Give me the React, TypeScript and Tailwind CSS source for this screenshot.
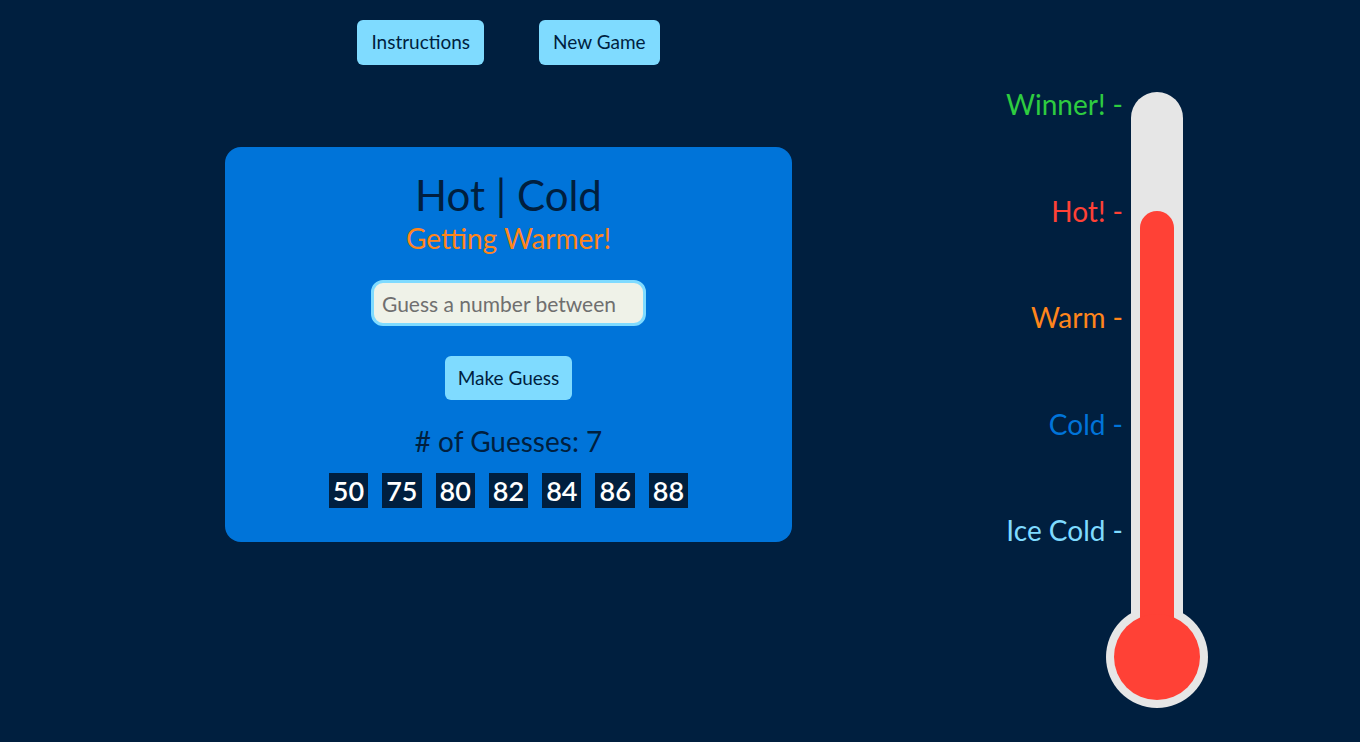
const guesses = [50, 75, 80, 82, 84, 86, 88];

const levels = [
  { label: "Winner! -", color: "text-[#2ecc40]" },
  { label: "Hot! -", color: "text-[#ff4136]" },
  { label: "Warm -", color: "text-[#ff851b]" },
  { label: "Cold -", color: "text-[#0074d9]" },
  { label: "Ice Cold -", color: "text-[#7fdbff]" },
];

function Thermometer() {
  return (
    <svg width="102" height="616" viewBox="0 0 102 616" className="mt-[92px] -ml-[17px] shrink-0">
      <rect x="25" y="0" width="52" height="560" rx="26" fill="#e6e6e6" />
      <circle cx="51" cy="565" r="51" fill="#e6e6e6" />
      <rect x="34" y="119" width="34" height="440" rx="17" fill="#ff4136" />
      <circle cx="51" cy="565" r="43" fill="#ff4136" />
    </svg>
  );
}

export default function App() {
  return (
    <div className="min-h-[742px] bg-[#001f3f] font-['Lato',sans-serif] flex overflow-hidden">
      <div className="w-[1017px] shrink-0 flex flex-col items-center pt-5">
        <div className="flex gap-[55px]">
          <button className="h-[45px] px-[14px] rounded-md bg-[#7fdbff] text-[#001f3f] text-[19px]">
            Instructions
          </button>
          <button className="h-[45px] px-[14px] rounded-md bg-[#7fdbff] text-[#001f3f] text-[19px]">
            New Game
          </button>
        </div>

        <div className="mt-[82px] w-[567px] rounded-2xl bg-[#0074d9] pt-6 pb-[34px] flex flex-col items-center">
          <h1 className="text-[42px] leading-[48px] text-[#001f3f]">Hot | Cold</h1>
          <p className="mt-[3px] text-[28px] leading-8 text-[#ff851b]">Getting Warmer!</p>
          <input
            type="number"
            placeholder="Guess a number between 1 and 100"
            className="mt-[26px] w-[275px] h-[46px] rounded-xl border-[3px] border-[#7fdbff] bg-[#eff2e8] px-2 text-[21px] text-[#333] placeholder:text-[#6f6f6f] outline-none"
          />
          <button className="mt-[30px] h-[44px] px-[13px] rounded-md bg-[#7fdbff] text-[#001f3f] text-[19px]">
            Make Guess
          </button>
          <p className="mt-[25px] text-[28px] leading-8 text-[#001f3f]">
            # of Guesses: 7
          </p>
          <div className="mt-4 flex gap-[14px]">
            {guesses.map((g) => (
              <span
                key={g}
                className="h-[35px] px-1 bg-[#001f3f] text-white text-[27px] leading-[35px] font-semibold"
              >
                {g}
              </span>
            ))}
          </div>
        </div>
      </div>

      <div className="flex">
        <div className="w-[106px] mt-[88px] flex flex-col items-end gap-[74.5px]">
          {levels.map((l) => (
            <span key={l.label} className={`${l.color} text-[28px] leading-8 whitespace-nowrap`}>
              {l.label}
            </span>
          ))}
        </div>
        <Thermometer />
      </div>
    </div>
  );
}
